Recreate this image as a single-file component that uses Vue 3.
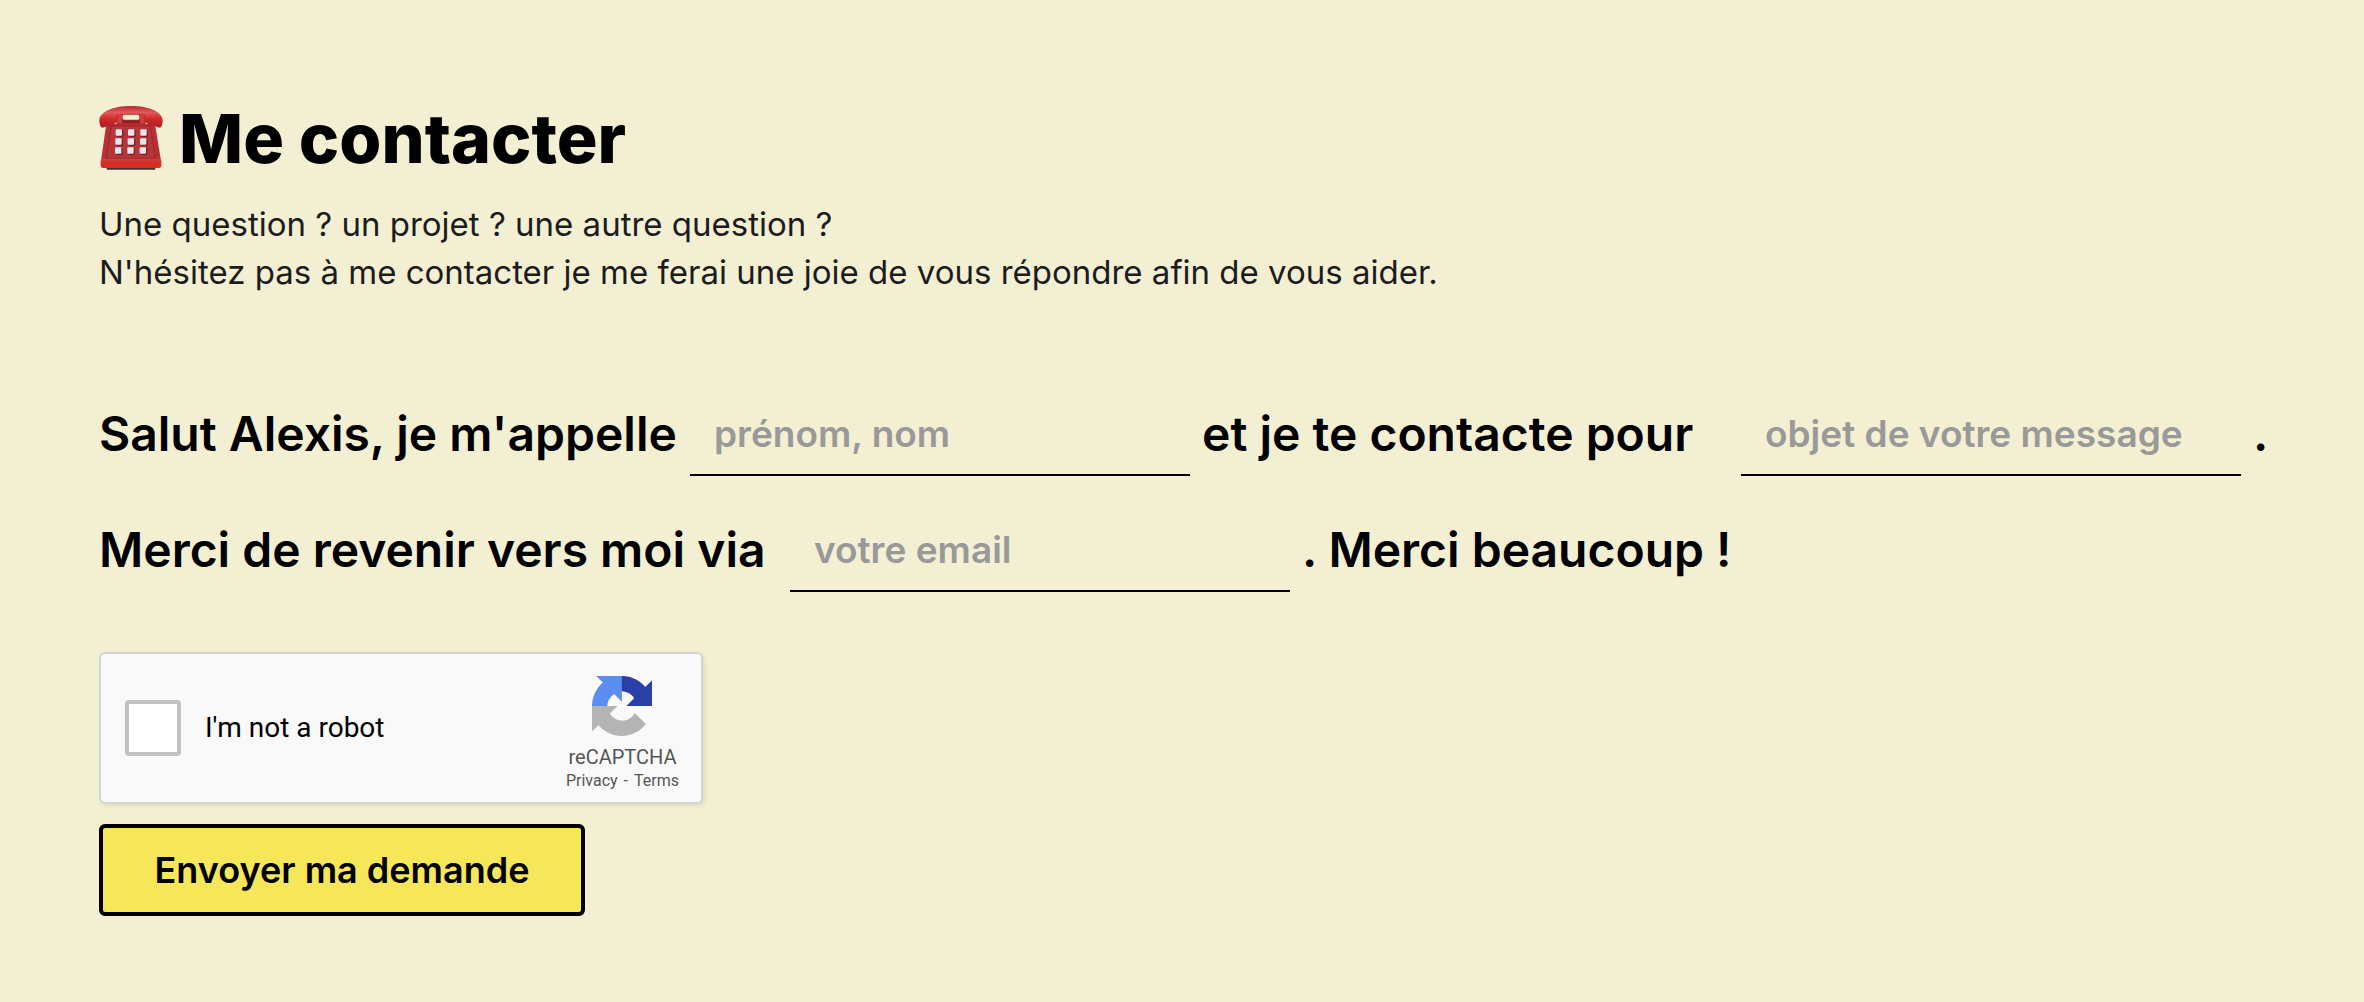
<script setup>
import { ref } from 'vue'

const name = ref('')
const subject = ref('')
const email = ref('')
const human = ref(false)
const keys = [0, 1, 2].flatMap((row) => [0, 1, 2].map((col) => ({ x: 49 + col * 37 - row, y: 70 + row * 27 })))
</script>

<template>
  <main class="contact">
    <h1 class="title">
      <svg class="phone" viewBox="0 0 190 192" aria-hidden="true">
        <defs>
          <linearGradient id="handset" x1="0" y1="0" x2="0" y2="1">
            <stop offset="0" stop-color="#b92c2c" />
            <stop offset=".3" stop-color="#e2585a" />
            <stop offset=".6" stop-color="#cf2a29" />
            <stop offset="1" stop-color="#a81d20" />
          </linearGradient>
          <linearGradient id="front" x1="0" y1="0" x2="0" y2="1">
            <stop offset="0" stop-color="#c9474a" />
            <stop offset=".4" stop-color="#d42d24" />
          </linearGradient>
        </defs>
        <rect x="22" y="182" width="146" height="9" rx="2" fill="#3a3330" />
        <path d="M51 18h88v42H51z" fill="#b3262a" />
        <path d="M27 54h134q6 0 7 6l17 104H5L20 60q1-6 7-6z" fill="#b92f34" />
        <path d="M36 59h116l16 98H20z" fill="#b5353a" stroke="#97272b" stroke-width="3" />
        <path d="M10 158h170q6 0 6 8v12q0 8-8 8H12q-8 0-8-8v-12q0-8 6-8z" fill="url(#front)" />
        <path d="M0 44C0 18 40 0 95 0s95 18 95 44c0 10-4 20-9 21l-36-12q-6-2-8-8V26q-42-6-84 0v19q-2 6-8 8L9 65C4 64 0 54 0 44z" fill="url(#handset)" />
        <path d="M55 24h13v28H55zM122 24h13v28h-13z" fill="#d43c3b" />
        <rect x="70" y="26" width="50" height="15" rx="4" fill="#f3efd2" />
        <path d="M70 43h50v8H70z" fill="#8f2022" />
        <g v-for="(key, i) in keys" :key="i">
          <rect :x="key.x + 3" :y="key.y + 3" width="20" height="20" rx="3" fill="#7f1f24" />
          <rect :x="key.x" :y="key.y" width="19" height="19" rx="3" fill="#e6e6ea" />
        </g>
      </svg>
      <span>Me contacter</span>
    </h1>
    <p class="intro">
      Une question ? un projet ? une autre question ?<br />
      N'hésitez pas à me contacter je me ferai une joie de vous répondre afin de vous aider.
    </p>

    <form @submit.prevent>
      <div class="sentence">
        <label class="opening" for="name">Salut Alexis, je m'appelle</label>
        <input id="name" v-model="name" type="text" placeholder="prénom, nom" />
        <label class="reason" for="subject">et je te contacte pour</label>
        <input id="subject" v-model="subject" type="text" placeholder="objet de votre message" />
        <span>.</span>
      </div>
      <div class="sentence">
        <label class="reply" for="email">Merci de revenir vers moi via</label>
        <input id="email" v-model="email" type="email" placeholder="votre email" />
        <span>. Merci beaucoup !</span>
      </div>

      <div class="captcha">
        <input id="human" v-model="human" type="checkbox" />
        <label for="human">I'm not a robot</label>
        <div class="brand">
          <svg class="logo" viewBox="0 0 64 64" aria-hidden="true">
            <path fill="#2a3fa8" d="M64 31.955l-.033-1.37V4.687l-7.16 7.16C50.948 4.674 42.033.093 32.05.093c-10.4 0-19.622 4.96-25.458 12.64l11.736 11.86a15.55 15.55 0 0 1 4.754-5.334c2.05-1.6 4.952-2.906 8.968-2.906.485 0 .86.057 1.135.163 4.976.393 9.288 3.14 11.828 7.124l-8.307 8.307L64 31.953" />
            <path fill="#5c8df0" d="M31.862.094l-1.37.033H4.594l7.16 7.16C4.58 13.147 0 22.06 0 32.046c0 10.4 4.96 19.622 12.64 25.458L24.5 45.768a15.55 15.55 0 0 1-5.334-4.754c-1.6-2.05-2.906-4.952-2.906-8.968 0-.485.057-.86.163-1.135.393-4.976 3.14-9.288 7.124-11.828l8.307 8.307L31.86.095" />
            <path fill="#b4b4b4" d="M.001 32.045l.033 1.37v25.898l7.16-7.16c5.86 7.173 14.774 11.754 24.76 11.754 10.4 0 19.622-4.96 25.458-12.64l-11.736-11.86a15.55 15.55 0 0 1-4.754 5.334c-2.05 1.6-4.952 2.906-8.968 2.906-.485 0-.86-.057-1.135-.163-4.976-.393-9.288-3.14-11.828-7.124l8.307-8.307c-10.522.04-22.4.066-27.295-.005" />
          </svg>
          <span class="brand-name">reCAPTCHA</span>
          <span class="legal"><a href="#privacy">Privacy</a><span>-</span><a href="#terms">Terms</a></span>
        </div>
      </div>

      <button type="submit">Envoyer ma demande</button>
    </form>
  </main>
</template>

<style>
body {
  margin: 0;
  background: #f3efd2;
}
</style>

<style scoped>
.contact {
  padding: 98px 80px 87px 99px;
  font-family: Inter, "Liberation Sans", sans-serif;
  color: #000;
}

.title {
  display: flex;
  align-items: center;
  gap: 16px;
  margin: 0;
  font-size: 68px;
  line-height: 80px;
  font-weight: 800;
}

.phone {
  width: 64px;
  height: 64px;
}

.intro {
  margin: 22px 0 0;
  font-size: 33px;
  line-height: 48px;
  color: #1c1c1c;
}

form {
  margin-top: 80px;
}

.sentence {
  display: flex;
  flex-wrap: wrap;
  align-items: center;
  column-gap: 12px;
  min-height: 116px;
  font-size: 48px;
  font-weight: 600;
  line-height: 80px;
}

.opening {
  min-width: 579px;
}

.reason {
  min-width: 527px;
}

.reply {
  min-width: 679px;
}

.sentence input {
  box-sizing: border-box;
  width: 500px;
  height: 84px;
  padding: 0 24px;
  border: 0;
  border-bottom: 2px solid #000;
  border-radius: 0;
  outline: 0;
  background: transparent;
  font: inherit;
  font-size: 37px;
}

.sentence input::placeholder {
  color: #999;
  opacity: 1;
}

.captcha {
  box-sizing: border-box;
  display: flex;
  align-items: center;
  width: 604px;
  height: 152px;
  margin-top: 44px;
  padding: 0 22px 0 24px;
  border: 2px solid #d3d3d3;
  border-radius: 6px;
  background: #f9f9f9;
  box-shadow: 2px 2px 4px rgba(0, 0, 0, 0.08);
  font-family: Roboto, sans-serif;
}

.captcha input {
  appearance: none;
  box-sizing: border-box;
  width: 56px;
  height: 56px;
  margin: 0 24px 0 0;
  border: 4px solid #c1c1c1;
  border-radius: 4px;
  background: #fff;
}

.captcha label {
  font-size: 28px;
  line-height: 34px;
}

.brand {
  display: flex;
  flex-direction: column;
  align-self: flex-start;
  align-items: center;
  margin: 22px 0 0 auto;
  color: #555;
}

.logo {
  width: 60px;
  height: 60px;
}

.brand-name {
  margin-top: 9px;
  font-size: 20px;
  line-height: 24px;
}

.legal {
  display: flex;
  gap: 6px;
  font-size: 16px;
  line-height: 24px;
}

.legal a {
  color: inherit;
  text-decoration: none;
}

button {
  display: block;
  box-sizing: border-box;
  min-width: 486px;
  height: 92px;
  margin-top: 20px;
  padding: 0 44px;
  border: 4px solid #000;
  border-radius: 6px;
  background: #f5e65a;
  color: #000;
  font: inherit;
  font-size: 36px;
  font-weight: 600;
}
</style>
